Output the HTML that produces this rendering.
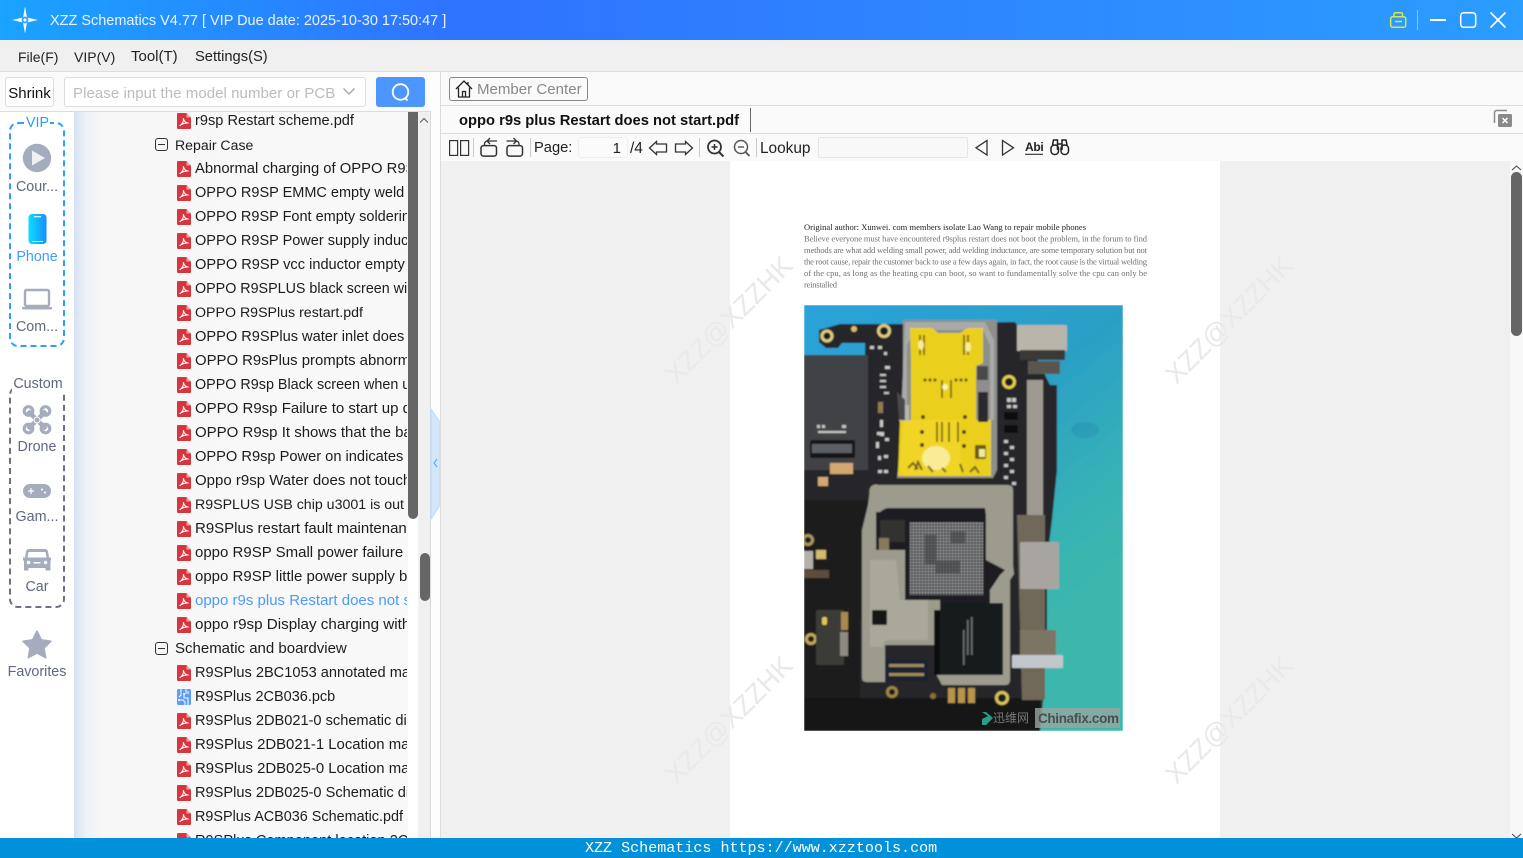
<!DOCTYPE html>
<html lang="en"><head><meta charset="utf-8"><title>XZZ Schematics</title>
<style>
html,body{margin:0;padding:0;width:1523px;height:858px;overflow:hidden;background:#fff}
body{position:relative;font-family:"Liberation Sans","Noto Sans CJK SC",sans-serif;font-size:15px;color:#222}
.a{position:absolute;white-space:nowrap}
.line{position:absolute;background:#dcdcdc}
#tree{position:absolute;left:74px;top:112px;width:334px;height:726px;overflow:hidden;background:linear-gradient(90deg,#d6e1f3 0,#eef1f6 12px,#f7f7f8 28px,#f8f8f8 100%)}
#in{margin-top:-3px}
.r{position:relative;height:24px;line-height:24px;white-space:nowrap;overflow:hidden;width:333px;padding-left:121px;box-sizing:border-box;color:#1c1c1c;font-size:14.5px}
.r svg{position:absolute;left:103px;top:4px;width:14px;height:16px}
.g{padding-left:101px}
.g svg{left:81px;top:5px;width:13px;height:13px}
.b{font-size:15px}
.n{position:absolute;left:0;width:74px;text-align:center;font-size:14.3px;color:#5f6880;line-height:18px}
svg{position:absolute;overflow:visible}
</style></head><body>
<svg width="0" height="0" style="position:absolute"><defs>
<symbol id="pdf" viewBox="0 0 14 16"><path d="M1 0H9.5L14 4.500V15a1 1 0 0 1-1 1H1a1 1 0 0 1-1-1V1a1 1 0 0 1 1-1z" fill="#d8353d"/><path d="M9.500 0V4.500H14z" fill="#f0a3a6"/><path d="M2.600 12.600C5 11.600 7 8 6.400 5.200 6.600 8 9 10.200 11.600 10 9.400 9.600 5.600 10.400 2.600 12.600z" fill="none" stroke="#fff" stroke-width="1.100"/></symbol>
<symbol id="pcb" viewBox="0 0 14 16"><rect width="14" height="16" rx="1.500" fill="#5c9dfb"/><path d="M4 0V6L2 8M9 0V5M11 16V9H7V5M2 11H6L8 13V16M11 5V2" fill="none" stroke="#fff" stroke-width="1"/><circle cx="7" cy="5" r="1" fill="#fff"/><circle cx="2" cy="11" r="1" fill="#fff"/></symbol>
<symbol id="minus" viewBox="0 0 13 13"><rect x=".5" y=".5" width="12" height="12" rx="2.500" fill="none" stroke="#333"/><path d="M3 6.500H10" stroke="#333"/></symbol>
<linearGradient id="ph" x1="0" x2="1" y1="0" y2="0"><stop offset="0" stop-color="#09e0ff"/><stop offset="1" stop-color="#1b8cff"/></linearGradient>
<linearGradient id="pbg" x1="0" y1="0" x2=".6" y2="1"><stop offset="0" stop-color="#2ba2da"/><stop offset=".45" stop-color="#2a9fc6"/><stop offset=".75" stop-color="#38b3b4"/><stop offset="1" stop-color="#3fb8b0"/></linearGradient>
<pattern id="bga" width="3" height="3" patternUnits="userSpaceOnUse"><rect width="3" height="3" fill="#3c3e40"/><circle cx="1.500" cy="1.500" r="1.050" fill="#a9acac"/></pattern>
<filter id="bl" x="0" y="0" width="1" height="1"><feGaussianBlur stdDeviation=".85"/></filter>
<filter id="tb"><feGaussianBlur stdDeviation=".22"/></filter>
</defs></svg>

<!-- Title bar -->
<div class="a" style="left:0;top:0;width:1523px;height:40px;background:linear-gradient(90deg,#1aa3ff 0,#2f74ff 29%,#2f74ff 33%,#2b9dff 100%)"></div>
<svg style="left:10px;top:5px" width="30" height="30" viewBox="0 0 30 30"><path d="M15 1.500L17 12.500 28 15 17 17.500 15 28.500 13 17.500 2 15 13 12.500z" fill="#fff" opacity=".95"/><circle cx="15" cy="15" r="3.400" fill="#2aa0ff"/><circle cx="15" cy="15" r="1.600" fill="#fff"/></svg>
<div class="a" style="left:50px;top:12px;line-height:19px;color:#e9f3ff;font-size:14.47px">XZZ Schematics V4.77 [ VIP Due date: 2025-10-30 17:50:47 ]</div>
<svg style="left:1385px;top:8px" width="130" height="26" viewBox="1385 8 130 26" fill="none"><rect x="1390.700" y="16.700" width="15" height="10.600" rx="2" stroke="#d4e84a" stroke-width="1.500"/><path d="M1394 16.500V14.200a1.500 1.500 0 0 1 1.500-1.500h5.500a1.500 1.500 0 0 1 1.500 1.500V16.500M1395 21.500H1402" stroke="#d4e84a" stroke-width="1.500"/><path d="M1417.500 10V30" stroke="#8cc6ff"/><path d="M1430 20H1446" stroke="#fff" stroke-width="2"/><rect x="1460.700" y="12.700" width="15" height="14.600" rx="3" stroke="#fff" stroke-width="1.500"/><path d="M1490.500 12.500L1505.500 27.500M1505.500 12.500L1490.500 27.500" stroke="#fff" stroke-width="1.600"/></svg>

<!-- Menu -->
<div class="a" style="left:0;top:40px;width:1523px;height:31px;background:#f0f0f0"></div>
<div class="line" style="left:0;top:71px;width:1523px;height:1px"></div>
<div class="a" style="left:18px;top:48px;line-height:18px;font-size:14px">File(F)</div>
<div class="a" style="left:74px;top:48px;line-height:18px;font-size:14px">VIP(V)</div>
<div class="a" style="left:131px;top:48px;line-height:18px;font-size:15px">Tool(T)</div>
<div class="a" style="left:195px;top:48px;line-height:18px;font-size:14.700px">Settings(S)</div>

<!-- Left head -->
<div class="a" style="left:0;top:72px;width:430px;height:39px;background:#fbfbfb"></div>
<div class="line" style="left:0;top:111px;width:431px;height:1px"></div>
<div class="a" style="left:5px;top:77px;width:47px;height:28px;border:1px solid #ddd;border-radius:3px;background:#fff;text-align:center;line-height:31px;color:#111">Shrink</div>
<div class="a" style="left:64px;top:77px;width:300px;height:28px;border:1px solid #ddd;border-radius:3px;background:#fff"></div>
<div class="a" style="left:73px;top:84px;line-height:19px;color:#bcbcbc;letter-spacing:.06px">Please input the model number or PCB</div>
<svg style="left:342px;top:86px" width="14" height="12" fill="none"><path d="M1.500 2.500L7 8 12.500 2.500" stroke="#a8a8a8" stroke-width="1.400"/></svg>
<div class="a" style="left:376px;top:77px;width:49px;height:30px;border-radius:3px;background:#4d96ff"></div>
<svg style="left:388px;top:81px" width="26" height="24" fill="none"><circle cx="12.500" cy="11" r="7.800" stroke="#fff" stroke-width="1.800"/><path d="M17 17L19.500 19.500" stroke="#fff" stroke-width="1.800"/></svg>

<!-- Sidebar -->
<div class="a" style="left:0;top:112px;width:74px;height:726px;background:#fff"></div>
<div class="a" style="left:9px;top:122px;width:52px;height:221px;border:2px dashed #2f9dff;border-radius:9px"></div>
<div class="a" style="left:25px;top:114px;width:25px;height:16px;text-align:center;background:#fff;color:#2f9dff;font-size:14.300px;line-height:18px">VIP</div>
<svg style="left:0;top:112px" width="74" height="240" viewBox="0 112 74 240"><circle cx="37" cy="158" r="14.200" fill="#a4acbd"/><path d="M32 150.500L45 158 32 165.500z" fill="#eef0f4"/><rect x="28.500" y="214" width="18" height="30" rx="3.500" fill="url(#ph)"/><rect x="34" y="216" width="7" height="1.300" fill="#cff6ff"/><rect x="32" y="241" width="11" height="1" fill="#cff6ff"/><rect x="25" y="290" width="24" height="16" rx="1.500" fill="none" stroke="#a4acbd" stroke-width="2.400"/><path d="M22 307H52V308a1.500 1.500 0 0 1-1.500 1.500H23.500a1.500 1.500 0 0 1-1.500-1.500z" fill="#a4acbd"/></svg>
<div class="n" style="top:178px">Cour...</div>
<div class="n" style="top:248px;color:#3d9dff">Phone</div>
<div class="n" style="top:318px">Com...</div>

<div class="a" style="left:9px;top:386px;width:52px;height:218px;border:2px dashed #6b7283;border-radius:9px"></div>
<div class="a" style="left:12px;top:376px;width:52px;height:16px;background:#fff;text-align:center;color:#5f6880;font-size:14.300px;line-height:16px">Custom</div>
<svg style="left:0;top:400px" width="74" height="260" viewBox="0 400 74 260"><g fill="none" stroke="#a4acbd"><path d="M28 411L46 429M46 411L28 429" stroke-width="4.500"/><circle cx="28.500" cy="411" r="4.300" stroke-width="3.200"/><circle cx="45.500" cy="411" r="4.300" stroke-width="3.200"/><circle cx="28.500" cy="428.500" r="4.300" stroke-width="3.200"/><circle cx="45.500" cy="428.500" r="4.300" stroke-width="3.200"/></g><circle cx="37" cy="420" r="3" fill="#a4acbd" stroke="#fff"/><rect x="23" y="484" width="28" height="14" rx="7" fill="#a4acbd"/><path d="M28 491H34M31 488V494" stroke="#fff" stroke-width="1.200"/><circle cx="42" cy="489.500" r="1" fill="#fff"/><circle cx="45" cy="492.500" r="1" fill="#fff"/><path d="M29 549H45Q47.500 549 48 551.500L49 557.500H51V560L50.500 561V570.500H45.500V568H28.500V570.500H24V561L23 560V557.500H25L26 551.500Q26.500 549 29 549z" fill="#a4acbd"/><path d="M28.500 552H45.500L46.500 557.500H27.500z" fill="#fff"/><circle cx="28.500" cy="562.500" r="1.800" fill="#fff"/><circle cx="45.500" cy="562.500" r="1.800" fill="#fff"/><rect x="33.500" y="562" width="7" height="1.500" fill="#fff"/><path d="M37 631L41.300 639.800 51 641.200 44 648 45.700 657.700 37 653.100 28.300 657.700 30 648 23 641.200 32.700 639.800z" fill="#a4acbd" stroke="#a4acbd" stroke-linejoin="round" stroke-width="1.500"/></svg>
<div class="n" style="top:438px">Drone</div>
<div class="n" style="top:508px">Gam...</div>
<div class="n" style="top:578px">Car</div>
<div class="n" style="top:663px">Favorites</div>

<!-- Tree -->
<div id="tree"><div id="in">
<div class="r" style="font-size:14.600px"><svg><use href="#pdf"/></svg>r9sp Restart scheme.pdf</div>
<div class="r g" style="font-size:14.100px"><svg><use href="#minus"/></svg>Repair Case</div>
<div class="r" style="font-size:14.800px"><svg><use href="#pdf"/></svg>Abnormal charging of OPPO R9S</div>
<div class="r"><svg><use href="#pdf"/></svg>OPPO R9SP EMMC empty weld</div>
<div class="r"><svg><use href="#pdf"/></svg>OPPO R9SP Font empty soldering</div>
<div class="r"><svg><use href="#pdf"/></svg>OPPO R9SP Power supply inductor</div>
<div class="r" style="font-size:14.600px"><svg><use href="#pdf"/></svg>OPPO R9SP vcc inductor empty</div>
<div class="r" style="font-size:14.300px"><svg><use href="#pdf"/></svg>OPPO R9SPLUS black screen with</div>
<div class="r" style="font-size:14.200px"><svg><use href="#pdf"/></svg>OPPO R9SPlus restart.pdf</div>
<div class="r" style="font-size:14.600px"><svg><use href="#pdf"/></svg>OPPO R9SPlus water inlet does</div>
<div class="r" style="font-size:14.900px"><svg><use href="#pdf"/></svg>OPPO R9sPlus prompts abnormal</div>
<div class="r" style="font-size:14.350px"><svg><use href="#pdf"/></svg>OPPO R9sp Black screen when using</div>
<div class="r b"><svg><use href="#pdf"/></svg>OPPO R9sp Failure to start up due</div>
<div class="r b"><svg><use href="#pdf"/></svg>OPPO R9sp It shows that the battery</div>
<div class="r" style="font-size:14.650px"><svg><use href="#pdf"/></svg>OPPO R9sp Power on indicates</div>
<div class="r b"><svg><use href="#pdf"/></svg>Oppo r9sp Water does not touch</div>
<div class="r" style="font-size:14.200px"><svg><use href="#pdf"/></svg>R9SPLUS USB chip u3001 is out</div>
<div class="r b"><svg><use href="#pdf"/></svg>R9SPlus restart fault maintenance</div>
<div class="r b"><svg><use href="#pdf"/></svg>oppo R9SP Small power failure</div>
<div class="r b"><svg><use href="#pdf"/></svg>oppo R9SP little power supply bad</div>
<div class="r b" style="color:#4a9bff"><svg><use href="#pdf"/></svg>oppo r9s plus Restart does not start</div>
<div class="r" style="font-size:15.200px"><svg><use href="#pdf"/></svg>oppo r9sp Display charging with</div>
<div class="r g b"><svg><use href="#minus"/></svg>Schematic and boardview</div>
<div class="r" style="font-size:14.600px"><svg><use href="#pdf"/></svg>R9SPlus 2BC1053 annotated map</div>
<div class="r" style="font-size:14.500px"><svg><use href="#pcb"/></svg>R9SPlus 2CB036.pcb</div>
<div class="r" style="font-size:14.600px"><svg><use href="#pdf"/></svg>R9SPlus 2DB021-0 schematic diagram</div>
<div class="r" style="font-size:14.900px"><svg><use href="#pdf"/></svg>R9SPlus 2DB021-1 Location map</div>
<div class="r" style="font-size:14.900px"><svg><use href="#pdf"/></svg>R9SPlus 2DB025-0 Location map</div>
<div class="r" style="font-size:14.600px"><svg><use href="#pdf"/></svg>R9SPlus 2DB025-0 Schematic diagram</div>
<div class="r" style="font-size:14.400px"><svg><use href="#pdf"/></svg>R9SPlus ACB036 Schematic.pdf</div>
<div class="r" style="font-size:14.600px"><svg><use href="#pdf"/></svg>R9SPlus Component location 2CP</div>
</div></div>
<div class="a" style="left:408px;top:112px;width:10px;height:407px;background:#666;border-radius:0 0 5px 5px"></div>
<div class="a" style="left:418px;top:112px;width:12px;height:726px;background:#f0f0f0"></div>
<svg style="left:418px;top:114px" width="12" height="10" fill="none"><path d="M2 8.500L6 4.500 10 8.500" stroke="#555"/></svg>
<div class="a" style="left:420px;top:553px;width:9.500px;height:48px;background:#666;border-radius:5px"></div>
<div class="line" style="left:430px;top:112px;width:1px;height:726px;background:#d8d8d8"></div>
<div class="a" style="left:431px;top:72px;width:9px;height:766px;background:#fdfdfd"></div>
<svg style="left:431px;top:408px" width="10" height="112" viewBox="0 0 10 112"><path d="M0 1L9 14V97L0 111z" fill="#d2e7fb" stroke="#b8dcff"/><path d="M6 51L3 55 6 59" fill="none" stroke="#62aef5" stroke-width="1.200"/></svg>
<div class="line" style="left:440px;top:72px;width:1px;height:766px;background:#dcdcdc"></div>

<!-- Right head -->
<div class="a" style="left:441px;top:72px;width:1082px;height:89px;background:#fafafa"></div>
<div class="line" style="left:441px;top:105px;width:1082px;height:1px"></div>
<div class="line" style="left:441px;top:133px;width:1082px;height:1px"></div>
<div class="a" style="left:449px;top:77px;width:137px;height:22px;border:1px solid #888;border-radius:3px"></div>
<svg style="left:455px;top:79px" width="20" height="20" fill="none" stroke="#222" stroke-width="1.300"><path d="M1 10L9 2 17 10M3.500 8.500V18H14.500V8.500M7.500 18V12.500H10.500V18M13 3V6"/></svg>
<div class="a" style="left:477px;top:80px;line-height:19px;color:#888;letter-spacing:.03px">Member Center</div>
<div class="a" style="left:459px;top:111px;line-height:20px;font-weight:bold;color:#111;font-size:14.740px">oppo r9s plus Restart does not start.pdf</div>
<div class="a" style="left:750px;top:108px;width:1px;height:24px;background:#666"></div>
<svg style="left:1493px;top:109px" width="20" height="20" fill="none"><path d="M1.500 14V3.500a2 2 0 0 1 2-2H14" stroke="#8a8a8a" stroke-width="1.500"/><rect x="5" y="5" width="14" height="13" rx="1.500" fill="#8a8a8a"/><path d="M9.500 9L14.500 14M14.500 9L9.500 14" stroke="#fff" stroke-width="1.500"/></svg>

<!-- Toolbar -->
<svg style="left:441px;top:134px" width="640" height="27" viewBox="441 134 640 27" fill="none" stroke="#333" stroke-width="1.200">
<rect x="449.600" y="140.600" width="8" height="14.800"/><rect x="460.600" y="140.600" width="8" height="14.800"/>
<g stroke="#ccc" stroke-width="1"><path d="M473.500 138V157M530.500 138V157M699.500 138V157M756.500 138V157"/></g>
<rect x="481" y="145.600" width="15.500" height="10.500" rx="2.500" stroke-width="1.500"/><path d="M484.500 145V144a3 3 0 0 1 3-3H497M490 138L487 141 490 144" stroke-width="1.300"/>
<rect x="507" y="145.600" width="15.500" height="10.500" rx="2.500" stroke-width="1.500"/><path d="M519 145V144a3 3 0 0 0-3-3H506.500M513.500 138L516.500 141 513.500 144" stroke-width="1.300"/>
<path d="M649.500 148L656.500 141.500V144H666.500V152H656.500V154.500z" stroke-width="1.300"/><path d="M692.500 148L685.500 141.500V144H675.500V152H685.500V154.500z" stroke-width="1.300"/>
<circle cx="714.500" cy="147" r="6.500" stroke-width="1.800"/><path d="M719 152L723.500 156.500" stroke-width="2"/><path d="M711.500 147H717.500M714.500 144V150" stroke-width="1.500"/>
<circle cx="741" cy="147" r="6.500" stroke="#555" stroke-width="1.500"/><path d="M745.500 152L749.500 156" stroke="#555" stroke-width="1.800"/><path d="M738 147H744" stroke="#555" stroke-width="1.400"/>
<path d="M987 140.500V155L976 147.800z" stroke-width="1.300"/><path d="M1002.500 140.500V155L1013.500 147.800z" stroke-width="1.300"/>
<path d="M1025 154.300H1043" stroke-width="1.200"/>
</svg>
<div class="a" style="left:534px;top:139px;line-height:19px;font-size:14.700px">Page:</div>
<div class="a" style="left:578px;top:137px;width:42px;height:19px;border:1px solid #eee;border-radius:3px;background:#fbfbfb;text-align:right;padding-right:6px;line-height:21px">1</div>
<div class="a" style="left:630px;top:139px;line-height:19px;font-size:15.500px">/4</div>
<div class="a" style="left:760px;top:139px;line-height:19px;font-size:15.400px">Lookup</div>
<div class="a" style="left:818px;top:137px;width:148px;height:19px;border:1px solid #e6e6e6;border-radius:2px;background:#f8f8f8"></div>
<div class="a" style="left:1025px;top:140px;font-size:12px;line-height:15px;font-weight:bold;letter-spacing:-.3px;color:#222">Abi</div>
<svg style="left:1049px;top:138px" width="22" height="18" fill="none" stroke="#222" stroke-width="1.500"><rect x="2" y="7" width="7.500" height="9.500" rx="3.500"/><rect x="12" y="7" width="7.500" height="9.500" rx="3.500"/><path d="M3.500 7L4.500 2H8.500V12M18 7L17 2H13V12M9 6H13"/></svg>

<!-- Content -->
<div class="a" style="left:441px;top:161px;width:1069px;height:677px;background:#f0f0f0"></div>
<div class="a" style="left:730px;top:161px;width:490px;height:677px;background:#fff"></div>
<div class="a" style="left:1510px;top:161px;width:13px;height:677px;background:#f8f8f8"></div>
<div class="a" style="left:1511px;top:172px;width:11px;height:164px;background:#666;border-radius:5.500px"></div>
<svg style="left:1510px;top:163px" width="13" height="10" fill="none"><path d="M2 7L6.500 3 11 7" stroke="#444"/></svg>
<svg style="left:1510px;top:832px" width="13" height="7" fill="none"><path d="M2 2L6.500 6 11 2" stroke="#444"/></svg>

<!-- Watermarks -->
<svg style="left:441px;top:161px" width="1069" height="677" viewBox="441 161 1069 677" font-family="Liberation Sans, sans-serif" font-size="27" fill="#e9e9e9" text-anchor="middle">
<text transform="translate(729 320) rotate(-45)" y="9">XZZ@XZZHK</text>
<text transform="translate(1229 320) rotate(-45)" y="9">XZZ@XZZHK</text>
<text transform="translate(729 720) rotate(-45)" y="9">XZZ@XZZHK</text>
<text transform="translate(1229 720) rotate(-45)" y="9">XZZ@XZZHK</text>
</svg>

<!-- Doc text -->
<svg style="left:730px;top:215px" width="490" height="80" viewBox="730 215 490 80" font-family="Liberation Serif, serif" font-size="8.500">
<g filter="url(#tb)">
<text x="804" y="230" fill="#222" textLength="282" lengthAdjust="spacing">Original author: Xunwei. com members isolate Lao Wang to repair mobile phones</text>
<g fill="#707070">
<text x="804" y="241.500" textLength="343" lengthAdjust="spacing">Believe everyone must have encountered r9splus restart does not boot the problem, in the forum to find</text>
<text x="804" y="253" textLength="343" lengthAdjust="spacing">methods are what add welding small power, add welding inductance, are some temporary solution but not</text>
<text x="804" y="264.500" textLength="343" lengthAdjust="spacing">the root cause, repair the customer back to use a few days again, in fact, the root cause is the virtual welding</text>
<text x="804" y="276" textLength="343" lengthAdjust="spacing">of the cpu, as long as the heating cpu can boot, so want to fundamentally solve the cpu can only be</text>
<text x="804" y="287.500" textLength="33" lengthAdjust="spacing">reinstalled</text>
</g></g></svg>

<!-- Photo -->
<svg style="left:804px;top:305px;overflow:hidden" width="319" height="426" viewBox="804 305 319 426">
<g filter="url(#bl)">
<rect x="804" y="305" width="319" height="426" fill="url(#pbg)"/>
<ellipse cx="1085" cy="430" rx="14" ry="8" fill="#2487ad" opacity=".35"/>
<path d="M1045 560L1123 530V731H1040z" fill="#3cb7ad" opacity=".7"/>
<path d="M804 355H865V343H842L838 348H826L819 342V330L840 324H900L1015 322 1030 345 1050 385H1057V470L1052 520 1047 560V640L1043 700 1040 731H804z" fill="#25282a"/>
<path d="M804 355H868V470H804z" fill="#3f4244"/>
<path d="M804 620H860V731H804z" fill="#1e1d1e"/>
<path d="M804 698H1040V731H804z" fill="#141414"/>
<path d="M804 500H870V620H804z" fill="#1a1b1c"/>
<!-- top metal -->
<rect x="1017" y="325" width="50" height="26" rx="1" fill="#b9b5ab"/>
<rect x="1020" y="350" width="45" height="10" fill="#3a3937"/>
<rect x="1028" y="361" width="32" height="13" fill="#5a5650"/>
<path d="M1027 380H1043V515H1027z" fill="#9f9a91"/>
<path d="M1017 515H1045V700H1022z" fill="#6f6859"/>
<rect x="1020" y="542" width="39" height="47" rx="1" fill="#a8a5a1"/>
<rect x="1020" y="630" width="36" height="25" fill="#7d7564"/>
<rect x="1012" y="655" width="51" height="13" rx="1" fill="#c3c7cb"/>
<!-- SIM frame -->
<path d="M903 320H997V470L993 478H897L903 420z" fill="#8e8f8c"/>
<path d="M905 322H985L994 340V420H990V345L983 330H915L907 345V420H901z" fill="#a9aaa7"/>
<path d="M910 328H932L938 333H960L968 328H983V363L976 366V420H991V476H898L900 420H911V360z" fill="#ead01e"/>
<path d="M925 420H960V476H905L900 470 904 420z" fill="#f0d526"/>
<ellipse cx="936" cy="458" rx="14" ry="12" fill="#f8ec96"/>
<path d="M920 335V355M924 335V355M964 335V355M968 335V355M942 380V398M951 380V398M937 422V442M942 422V442M949 422V442M958 422V442" stroke="#6a5a10" stroke-width="1.600"/>
<ellipse cx="921" cy="345" rx="3" ry="5" fill="#f8ec9a"/><ellipse cx="968" cy="347" rx="3" ry="5" fill="#f8ec9a"/><circle cx="945" cy="387" r="3" fill="#fbf2b5"/>
<g fill="#4a3d10"><circle cx="925" cy="380" r="1.500"/><circle cx="930" cy="380" r="1.500"/><circle cx="935" cy="380" r="1.500"/><circle cx="956" cy="380" r="1.500"/><circle cx="961" cy="380" r="1.500"/><circle cx="966" cy="380" r="1.500"/><circle cx="923" cy="417" r="2"/><circle cx="965" cy="417" r="2"/><circle cx="922" cy="432" r="2"/><circle cx="964" cy="432" r="2"/><circle cx="922" cy="445" r="2"/><circle cx="964" cy="446" r="2"/></g>
<rect x="977" y="366" width="11" height="14" fill="#4a4a48"/><path d="M978 392H988V422H978z" fill="#2c2c2c"/>
<rect x="975" y="445" width="11" height="14" rx="1.500" fill="#6a5a18"/><rect x="979" y="449" width="6" height="8" fill="#f5e9a0"/>
<path d="M908 468l5-5 5 6M915 470l3-8 4 8M928 466l5 6M942 468l4 4M960 464l3 8M970 472l5-5 4 6" stroke="#7a5f1a" stroke-width="2" fill="none"/>
<rect x="899" y="405" width="10" height="16" fill="#b8b8b4"/><path d="M897 392L905 400V420H899z" fill="#4a4a48"/>
<!-- rings -->
<g fill="#1d1d1a" stroke="#dccb7e" stroke-width="3"><circle cx="827" cy="336" r="5"/><circle cx="884" cy="331" r="5.500"/><circle cx="1009" cy="382" r="5.500" stroke="#e3d14a"/><circle cx="876" cy="491" r="5" stroke="#bda65c"/><circle cx="1004" cy="553" r="5" stroke="#d9c45c"/><circle cx="808" cy="540" r="4.500" stroke="#a89660"/><circle cx="811" cy="639" r="4.500" stroke="#c1a95a"/><circle cx="892" cy="692" r="4.500" stroke="#9e8644"/><circle cx="1002" cy="698" r="5.500" stroke="#d9c45c"/></g>
<circle cx="854" cy="329" r="3" fill="#d8bd6c"/>
<!-- small parts -->
<g fill="#c8c8c6"><rect x="870" y="346" width="4" height="3"/><rect x="878" y="346" width="4" height="3"/><rect x="884" y="352" width="3" height="3"/><rect x="885" y="366" width="5" height="3"/><rect x="880" y="374" width="6" height="2"/><rect x="880" y="380" width="6" height="2"/><rect x="880" y="386" width="6" height="2"/><rect x="884" y="392" width="5" height="2"/><rect x="880" y="420" width="3" height="7"/><rect x="880" y="432" width="4" height="4"/><rect x="885" y="438" width="4" height="3"/><rect x="877" y="432" width="3" height="3"/><rect x="876" y="442" width="3" height="6"/><rect x="884" y="455" width="4" height="3"/><rect x="878" y="456" width="3" height="4"/><rect x="884" y="470" width="4" height="3"/><rect x="878" y="470" width="4" height="3"/><rect x="1007" y="398" width="4" height="4"/><rect x="1012" y="398" width="4" height="4"/><rect x="1007" y="405" width="4" height="3"/><rect x="1013" y="405" width="4" height="3"/><rect x="1004" y="440" width="4" height="3"/><rect x="1010" y="446" width="4" height="3"/><rect x="1004" y="452" width="4" height="3"/><rect x="1010" y="458" width="4" height="3"/><rect x="1004" y="464" width="4" height="3"/><rect x="1010" y="470" width="4" height="3"/><rect x="1004" y="476" width="4" height="3"/><rect x="1012" y="482" width="4" height="3"/><rect x="817" y="425" width="3" height="3"/><rect x="822" y="425" width="3" height="3"/><rect x="818" y="431" width="28" height="2"/><rect x="842" y="425" width="4" height="3"/></g>
<rect x="878" y="402" width="5" height="11" fill="#8f7a52"/><rect x="1004" y="412" width="14" height="8" fill="#111"/><rect x="1004" y="425" width="14" height="8" fill="#111"/>
<!-- connector -->
<rect x="810" y="440" width="45" height="18" rx="2" fill="#121416"/><rect x="812" y="444" width="40" height="9" fill="#5b6066"/>
<rect x="830" y="463" width="23" height="11" fill="#d3a873"/><rect x="818" y="477" width="10" height="9" fill="#d3a873"/>
<!-- lower shield -->
<path d="M870 490Q870 485 875 485H1008Q1013 485 1013 490V565L1014 574 1010 580V680Q1010 685 1005 685H942L935 672V645H885V682H867Q862 682 862 678V530L868 505z" fill="#9c9b8e"/>
<path d="M888 508Q885 508 880 512H876V550H905V600H940V610H990V590L1000 575 1005 570 986 560V515L985 508z" fill="#1d1e20"/>
<rect x="910" y="522" width="73" height="73" fill="url(#bga)"/>
<path d="M925 535h12v30h-12zM950 532h15v12h-15zM935 560h25v14h-25z" fill="#3e4042" opacity=".55"/>
<rect x="880" y="520" width="25" height="22" fill="#30312f"/>
<rect x="879" y="538" width="10" height="12" fill="#857a5e"/>
<path d="M870 560H896L900 600H928V640H885L883 647H870z" fill="#aaa89a"/>
<rect x="872" y="610" width="15" height="15" rx="1" fill="#181818"/>
<rect x="940" y="603" width="63" height="72" fill="#171a1c"/>
<path d="M934 610H940V675H934z" fill="#111"/>
<g fill="#6d6f70"><rect x="971" y="617" width="1.500" height="38"/><rect x="967" y="620" width="1.500" height="35"/><rect x="963" y="630" width="1.500" height="35"/></g>
<!-- bottom connector -->
<rect x="885" y="659" width="43" height="22" rx="2" fill="#1a2330"/><rect x="889" y="664" width="35" height="3" fill="#a08b58"/><rect x="889" y="673" width="35" height="3" fill="#a08b58"/>
<rect x="948" y="688" width="7" height="15" fill="#b8954a"/><rect x="958" y="688" width="7" height="15" fill="#b8954a"/><rect x="968" y="688" width="7" height="15" fill="#b8954a"/><circle cx="933" cy="696" r="3" fill="#8a6f3a"/>
<!-- left lower bits -->
<rect x="816" y="610" width="28" height="55" rx="2" fill="#3a3a38"/><rect x="822" y="617" width="5" height="8" rx="2" fill="#e6c45a"/><rect x="841" y="612" width="7" height="18" fill="#a88a50"/><rect x="840" y="632" width="8" height="24" fill="#8d8a82"/>
<rect x="804" y="551" width="9" height="18" fill="#b3b1a8"/><rect x="816" y="550" width="10" height="9" fill="#d2ba70"/><rect x="804" y="570" width="25" height="8" fill="#5d4e3c"/>
</g>
<path d="M987 716l6-3-6-4 4 0 7 6-7 7h-4z" fill="#2a9d86" transform="translate(-5 3)"/>
<text x="993" y="722" font-family="Noto Sans CJK SC, sans-serif" font-size="12" fill="#77797a">迅维网</text>
<rect x="1035" y="708" width="85" height="20" fill="#9aa5a0" opacity=".8"/>
<text x="1038" y="723" font-family="Liberation Sans, sans-serif" font-size="13.500" font-weight="bold" fill="#47504e" textLength="81">Chinafix.com</text>
</svg>

<!-- Bottom bar -->
<div class="a" style="left:0;top:838px;width:1523px;height:20px;background:#0091da"></div>
<div class="a" style="left:585px;top:840px;line-height:17px;font-family:'Liberation Mono',monospace;font-size:15.050px;color:#fff">XZZ Schematics https://www.xzztools.com</div>
</body></html>
